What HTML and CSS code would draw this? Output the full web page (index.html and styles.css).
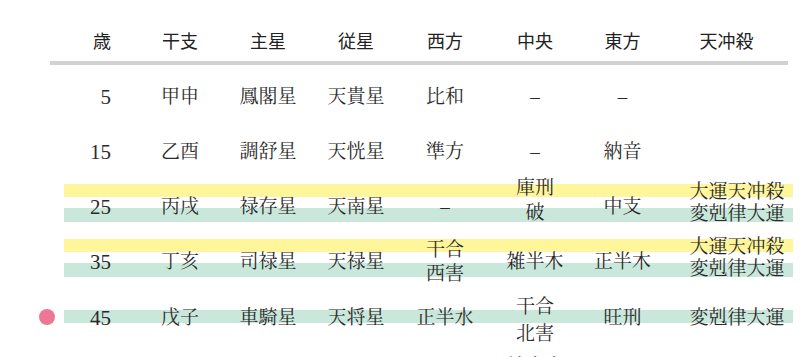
FILE: index.html
```html
<!DOCTYPE html>
<html lang="ja">
<head>
<meta charset="utf-8">
<title>大運表</title>
<link rel="stylesheet" href="styles.css">
</head>
<body>
<div class="table">
  <div class="head">
    <div class="hc num">歳</div>
    <div class="hc">干支</div>
    <div class="hc">主星</div>
    <div class="hc">従星</div>
    <div class="hc">西方</div>
    <div class="hc">中央</div>
    <div class="hc">東方</div>
    <div class="hc">天冲殺</div>
  </div>

  <div class="row">
    <div class="mark"></div>
    <div class="cells">
      <div class="c num">5</div>
      <div class="c">甲申</div>
      <div class="c">鳳閣星</div>
      <div class="c">天貴星</div>
      <div class="c">比和</div>
      <div class="c">–</div>
      <div class="c">–</div>
      <div class="c last"></div>
    </div>
  </div>

  <div class="row">
    <div class="mark"></div>
    <div class="cells">
      <div class="c num">15</div>
      <div class="c">乙酉</div>
      <div class="c">調舒星</div>
      <div class="c">天恍星</div>
      <div class="c">準方</div>
      <div class="c">–</div>
      <div class="c">納音</div>
      <div class="c last"></div>
    </div>
  </div>

  <div class="row">
    <div class="mark"></div>
    <div class="cells band-yg">
      <div class="c num">25</div>
      <div class="c">丙戌</div>
      <div class="c">禄存星</div>
      <div class="c">天南星</div>
      <div class="c">–</div>
      <div class="c multi up">庫刑<br>破</div>
      <div class="c">中支</div>
      <div class="c last multi2">大運天冲殺<br>変剋律大運</div>
    </div>
  </div>

  <div class="row">
    <div class="mark"></div>
    <div class="cells band-yg">
      <div class="c num">35</div>
      <div class="c">丁亥</div>
      <div class="c">司禄星</div>
      <div class="c">天禄星</div>
      <div class="c multi">干合<br>西害</div>
      <div class="c">雑半木</div>
      <div class="c">正半木</div>
      <div class="c last multi2">大運天冲殺<br>変剋律大運</div>
    </div>
  </div>

  <div class="row">
    <div class="mark"><span class="dot"></span></div>
    <div class="cells band-g">
      <div class="c num">45</div>
      <div class="c">戊子</div>
      <div class="c">車騎星</div>
      <div class="c">天将星</div>
      <div class="c">正半水</div>
      <div class="c multi3">干合<br>北害</div>
      <div class="c">旺刑</div>
      <div class="c last">変剋律大運</div>
    </div>
  </div>

  <div class="row">
    <div class="mark"></div>
    <div class="cells top">
      <div class="c num"></div>
      <div class="c"></div>
      <div class="c"></div>
      <div class="c"></div>
      <div class="c"></div>
      <div class="c">納音合</div>
      <div class="c"></div>
      <div class="c last"></div>
    </div>
  </div>
</div>
</body>
</html>
```

FILE: styles.css
```css
html, body {
  margin: 0;
  padding: 0;
  background: #ffffff;
  overflow: hidden;
}

body {
  width: 805px;
  height: 357px;
  color: #2a2a2a;
}

.table {
  display: flex;
  flex-direction: column;
}

.head {
  display: grid;
  grid-template-columns: 72px 88px 88px 88px 90px 90px 85px 123px;
  margin-left: 50px;
  width: 738px;
  box-sizing: border-box;
  padding: 28px 0 9px 14px;
  border-bottom: 4px solid #d2d2d2;
  font-family: "Noto Sans CJK JP", "Noto Sans", sans-serif;
  font-size: 18px;
  line-height: 24px;
  color: #222;
}

.hc {
  text-align: center;
}

.hc.num {
  text-align: right;
  padding-right: 25px;
}

.row {
  display: flex;
  height: 55px;
}

.head + .row {
  margin-top: 4px;
}

.mark {
  width: 64px;
  flex: none;
  display: flex;
  align-items: center;
  box-sizing: border-box;
  padding-left: 39px;
}

.dot {
  width: 16px;
  height: 16px;
  border-radius: 50%;
  background: #ec7895;
}

.cells {
  display: grid;
  grid-template-columns: 72px 88px 88px 88px 90px 90px 85px 128px;
  width: 729px;
  align-items: center;
  font-family: "Liberation Serif", "Noto Serif CJK JP", "Noto Sans CJK JP", serif;
  font-size: 19px;
  line-height: 24px;
  color: #2a2a2a;
}

.c {
  text-align: center;
}

.c.num {
  text-align: right;
  padding-right: 25px;
  font-size: 21px;
}

.c.last {
  padding-left: 16px;
}

.multi {
  line-height: 24px;
}

.multi.up {
  line-height: 25px;
  margin-top: -14px;
}

.multi2 {
  line-height: 22px;
  margin-top: -8px;
}

.multi3 {
  line-height: 27px;
  margin-top: 4px;
}

.cells.top {
  align-items: start;
  padding-top: 11px;
}

.band-yg {
  background: linear-gradient(to bottom,
    transparent 0 5px,
    #fff69c 5px 18px,
    transparent 18px 29px,
    #c9e7da 29px 43px,
    transparent 43px);
}

.band-g {
  background: linear-gradient(to bottom,
    transparent 0 21px,
    #c9e7da 21px 34px,
    transparent 34px);
}
```
